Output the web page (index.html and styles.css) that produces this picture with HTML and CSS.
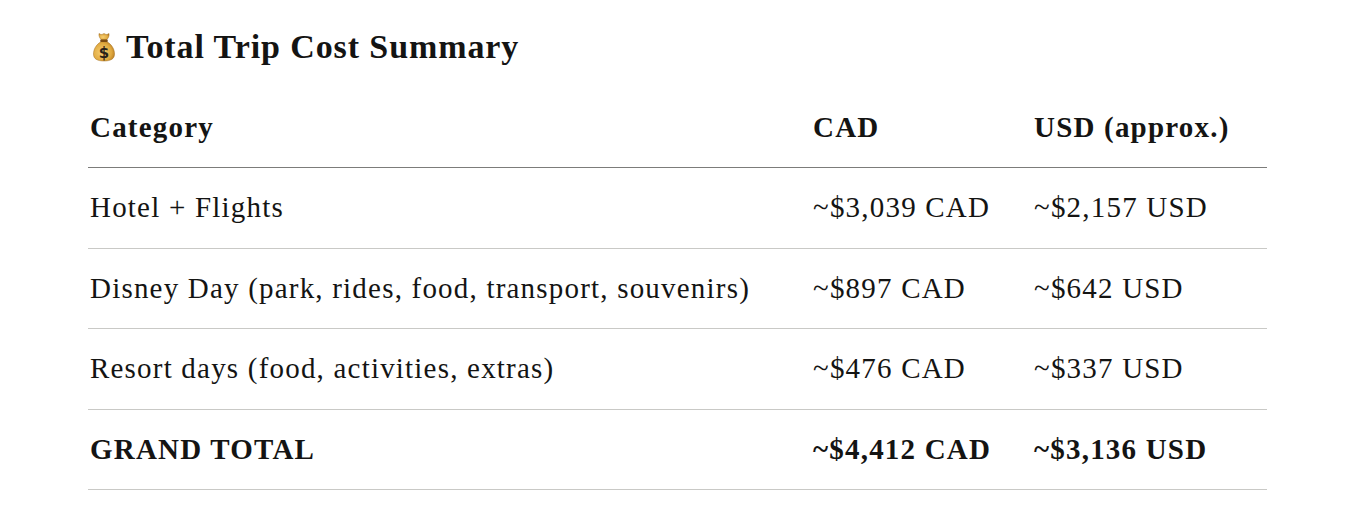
FILE: index.html
```html
<!DOCTYPE html>
<html>
<head>
<meta charset="utf-8">
<link rel="stylesheet" href="styles.css">
</head>
<body>
<div class="page">
  <h2 class="title">
    <svg class="bag" viewBox="0 0 24 30" width="24" height="30" aria-hidden="true">
      <defs>
        <radialGradient id="g" cx="40%" cy="55%" r="65%">
          <stop offset="0" stop-color="#f6cf73"/>
          <stop offset="0.7" stop-color="#e0a93f"/>
          <stop offset="1" stop-color="#b97d22"/>
        </radialGradient>
      </defs>
      <path d="M7 1.5 C9 3 10.5 2.5 12 1.5 C13.5 2.5 15 3 17 1.5 C17.5 4 16 6.5 14.5 8 L9.5 8 C8 6.5 6.5 4 7 1.5 Z" fill="url(#g)" stroke="#a36d1c" stroke-width="0.5"/>
      <path d="M9.3 9.5 C4 12.5 1.5 17.5 1.5 22 C1.5 27 5.5 29 12 29 C18.5 29 22.5 27 22.5 22 C22.5 17.5 20 12.5 14.7 9.5 Z" fill="url(#g)" stroke="#a36d1c" stroke-width="0.5"/>
      <rect x="8.2" y="7.6" width="7.6" height="2.4" rx="1.1" fill="#7a4a12"/>
      <text x="12" y="26" text-anchor="middle" class="dollar">$</text>
    </svg>
    <span>Total Trip Cost Summary</span>
  </h2>
  <table class="costs">
    <colgroup>
      <col class="c1"><col class="c2"><col class="c3">
    </colgroup>
    <thead>
      <tr><th>Category</th><th>CAD</th><th>USD (approx.)</th></tr>
    </thead>
    <tbody>
      <tr><td>Hotel + Flights</td><td>~$3,039 CAD</td><td>~$2,157 USD</td></tr>
      <tr><td>Disney Day (park, rides, food, transport, souvenirs)</td><td>~$897 CAD</td><td>~$642 USD</td></tr>
      <tr><td>Resort days (food, activities, extras)</td><td>~$476 CAD</td><td>~$337 USD</td></tr>
      <tr class="total"><td>GRAND TOTAL</td><td>~$4,412 CAD</td><td>~$3,136 USD</td></tr>
    </tbody>
  </table>
</div>
</body>
</html>
```

FILE: styles.css
```css
html, body {
  margin: 0;
  padding: 0;
  background: #ffffff;
}
body {
  font-family: "Liberation Serif", "Times New Roman", serif;
  color: #141413;
}
.page {
  padding: 30px 0 0 88px;
  width: 1179px;
}
.title {
  display: flex;
  align-items: center;
  gap: 10px;
  margin: 0;
  height: 34px;
  padding-left: 4px;
  font-size: 34px;
  font-weight: 700;
  letter-spacing: 0.9px;
}
.bag {
  display: block;
  flex: none;
}
.dollar {
  font-family: "DejaVu Sans", sans-serif;
  font-weight: 700;
  font-size: 15px;
  letter-spacing: 0;
  fill: #2a2118;
}
.costs {
  margin-top: 23px;
  width: 1179px;
  border-collapse: collapse;
  table-layout: fixed;
  font-size: 29px;
  letter-spacing: 1.2px;
}
.c1 { width: 723px; }
.c2 { width: 221px; }
.c3 { width: 235px; }
.costs th, .costs td {
  text-align: left;
  padding: 0 0 0 2px;
  vertical-align: middle;
  white-space: nowrap;
}
.costs th {
  height: 80px;
  font-weight: 700;
  border-bottom: 1px solid #7c7c7a;
}
.costs td {
  height: 79.6px;
  font-weight: 400;
  border-bottom: 1px solid #c9c9c6;
}
.costs .total td {
  font-weight: 700;
}
```
